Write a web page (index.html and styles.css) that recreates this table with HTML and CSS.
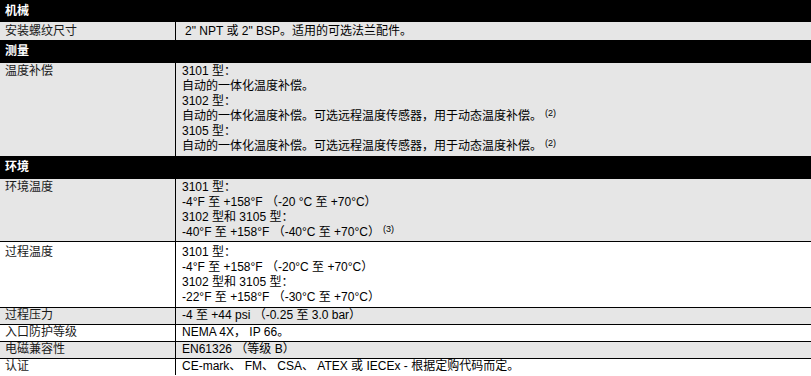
FILE: index.html
```html
<!DOCTYPE html>
<html lang="zh">
<head>
<meta charset="utf-8">
<title>规格</title>
<link rel="stylesheet" href="styles.css">
</head>
<body>
<table class="spec">
  <tr class="sec first"><th colspan="2">机械</th></tr>
  <tr class="g r1"><td class="k">安装螺纹尺寸</td><td class="v indent">2" NPT 或 2" BSP。适用的可选法兰配件。</td></tr>
  <tr class="sec"><th colspan="2">测量</th></tr>
  <tr class="g r2"><td class="k">温度补偿</td><td class="v">3101 型：<br>自动的一体化温度补偿。<br>3102 型：<br>自动的一体化温度补偿。可选远程温度传感器，用于动态温度补偿。<sup>(2)</sup><br>3105 型：<br>自动的一体化温度补偿。可选远程温度传感器，用于动态温度补偿。<sup>(2)</sup></td></tr>
  <tr class="sec"><th colspan="2">环境</th></tr>
  <tr class="g r3"><td class="k">环境温度</td><td class="v">3101 型：<br>-4°F 至 +158°F （-20 °C 至 +70°C）<br>3102 型和 3105 型：<br>-40°F 至 +158°F （-40°C 至 +70°C）<sup>(3)</sup></td></tr>
  <tr class="line r4"><td class="k">过程温度</td><td class="v">3101 型：<br>-4°F 至 +158°F （-20°C 至 +70°C）<br>3102 型和 3105 型：<br>-22°F 至 +158°F （-30°C 至 +70°C）</td></tr>
  <tr class="g line"><td class="k">过程压力</td><td class="v">-4 至 +44 psi （-0.25 至 3.0 bar）</td></tr>
  <tr class="line"><td class="k">入口防护等级</td><td class="v">NEMA 4X， IP 66。</td></tr>
  <tr class="g line"><td class="k">电磁兼容性</td><td class="v">EN61326 （等级 B）</td></tr>
  <tr class="line"><td class="k">认证</td><td class="v">CE-mark、 FM、 CSA、 ATEX 或 IECEx - 根据定购代码而定。</td></tr>
</table>
</body>
</html>
```
FILE: styles.css
```css
html, body {
  margin: 0;
  padding: 0;
  background: #fff;
}
.spec {
  width: 811px;
  border-collapse: collapse;
  font-family: "Liberation Sans", "Noto Sans CJK SC", sans-serif;
  font-size: 12px;
  line-height: 15px;
  color: #000;
  text-spacing-trim: space-all;
}
.spec th {
  background: #000;
  color: #fff;
  font-weight: bold;
  text-align: left;
  padding: 4px 5px 4px;
}
.spec tr.first th {
  padding-bottom: 3px;
}
.spec td {
  vertical-align: top;
  padding: 0 6px 1px;
}
.spec td.k {
  width: 164px;
  padding-left: 5px;
  border-right: 1px solid #000;
  color: #1a1a1a;
}
.spec td.indent {
  padding-left: 9px;
}
.spec tr.g td {
  background: #e6e6e6;
}
.spec tr.line td {
  border-top: 1px solid #000;
}
.spec tr.r1 td {
  padding-top: 2px;
  padding-bottom: 1px;
}
.spec tr.r2 td {
  padding-top: 1px;
  padding-bottom: 2px;
}
.spec tr.r3 td {
  padding-top: 1px;
  padding-bottom: 1px;
}
.spec tr.r4 td {
  padding-top: 3px;
  padding-bottom: 2px;
}
.spec sup {
  font-size: 9px;
  line-height: 0;
  vertical-align: 4px;
  margin-left: 3px;
}
```
